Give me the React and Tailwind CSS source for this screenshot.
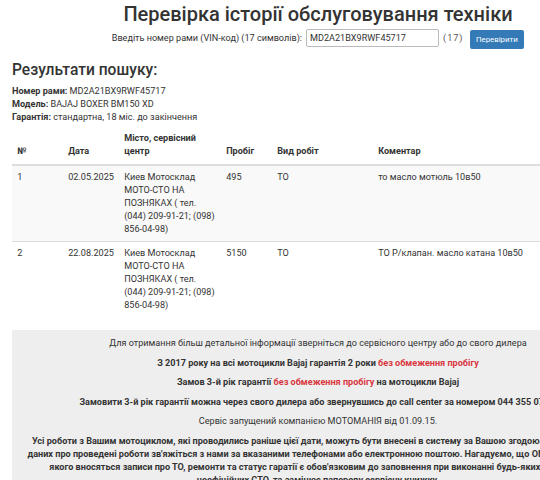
export default function App() {
    const rows = [
        {
            n: 1,
            date: '02.05.2025',
            center: 'Киев Мотосклад МОТО-СТО НА ПОЗНЯКАХ ( тел. (044) 209-91-21; (098) 856-04-98)',
            km: '495',
            work: 'ТО',
            note: 'то масло мотюль 10в50',
        },
        {
            n: 2,
            date: '22.08.2025',
            center: 'Киев Мотосклад МОТО-СТО НА ПОЗНЯКАХ ( тел. (044) 209-91-21; (098) 856-04-98)',
            km: '5150',
            work: 'ТО',
            note: 'ТО Р/клапан. масло катана 10в50',
        },
    ];

    const red = 'text-[#d9363e]';

    return (
        <div className="w-full overflow-hidden bg-white">
            <div className="w-[636px] px-[12px] font-[Roboto,sans-serif] text-[9.1px] leading-[13px] text-[#333]">
                <h1 className="pt-[3px] text-center text-[20px] leading-[22px] font-medium">
                    Перевірка історії обслуговування техніки
                </h1>

                <form className="mt-[2px] flex items-center justify-center" onSubmit={(e) => e.preventDefault()}>
                    <label className="mr-[4px]">Введіть номер рами (VIN-код) (17 символів):</label>
                    <input
                        type="text"
                        defaultValue="MD2A21BX9RWF45717"
                        className="h-[18px] w-[133px] rounded-[2px] border border-[#bbb] px-[3px] text-[9.1px] text-[#333] outline-none"
                    />
                    <span className="ml-[4px] tracking-[1px] text-[#555]">(17)</span>
                    <button
                        type="submit"
                        className="ml-[6px] mt-[3px] h-[19px] rounded-[2px] bg-[#337ab7] px-[6.5px] text-[7.8px] leading-[19px] text-white"
                    >
                        Перевірити
                    </button>
                </form>

                <h3 className="mt-[13px] mb-[6px] text-[15.6px] leading-[1.1] font-medium">Результати пошуку:</h3>

                <div>
                    <div><strong>Номер рами:</strong> MD2A21BX9RWF45717</div>
                    <div><strong>Модель:</strong> BAJAJ BOXER BM150 XD</div>
                    <div><strong>Гарантія:</strong> стандартна, 18 міс. до закінчення</div>
                </div>

                <table className="mt-[3px] mb-[13px] w-full table-fixed border-collapse">
                    <thead>
                        <tr>
                            <th className="w-[51px] border-b-2 border-[#ddd] p-[5.2px] text-left align-bottom font-bold">№</th>
                            <th className="w-[56px] border-b-2 border-[#ddd] p-[5.2px] text-left align-bottom font-bold">Дата</th>
                            <th className="w-[102px] border-b-2 border-[#ddd] p-[5.2px] text-left align-bottom font-bold">Місто, сервісний центр</th>
                            <th className="w-[51px] border-b-2 border-[#ddd] p-[5.2px] text-left align-bottom font-bold">Пробіг</th>
                            <th className="w-[101px] border-b-2 border-[#ddd] p-[5.2px] text-left align-bottom font-bold">Вид робіт</th>
                            <th className="border-b-2 border-[#ddd] p-[5.2px] text-left align-bottom font-bold">Коментар</th>
                        </tr>
                    </thead>
                    <tbody>
                        {rows.map((row, i) => (
                            <tr key={row.n} className={i % 2 === 0 ? 'bg-[#f9f9f9]' : ''}>
                                <td className="border-t border-[#ddd] p-[5.2px] align-top">{row.n}</td>
                                <td className="border-t border-[#ddd] p-[5.2px] align-top">{row.date}</td>
                                <td className="border-t border-[#ddd] p-[5.2px] align-top">{row.center}</td>
                                <td className="border-t border-[#ddd] p-[5.2px] align-top">{row.km}</td>
                                <td className="border-t border-[#ddd] p-[5.2px] align-top">{row.work}</td>
                                <td className="border-t border-[#ddd] p-[5.2px] align-top">{row.note}</td>
                            </tr>
                        ))}
                    </tbody>
                </table>

                <div className="bg-[#eee] pt-[7px] pb-[10px] text-center">
                    <p className="mb-[6.5px]">
                        Для отримання більш детальної інформації зверніться до сервісного центру або до свого дилера
                    </p>
                    <p className="mb-[6.5px] font-bold">
                        З 2017 року на всі мотоцикли Bajaj гарантія 2 роки <span className={red}>без обмеження пробігу</span>
                    </p>
                    <p className="mb-[6.5px] font-bold">
                        Замов 3-й рік гарантії <span className={red}>без обмеження пробігу</span> на мотоцикли Bajaj
                    </p>
                    <p className="mb-[6.5px] font-bold">
                        Замовити 3-й рік гарантії можна через свого дилера або звернувшись до call center за номером 044 355 07 07
                    </p>
                    <p className="mb-[6.5px]">Сервіс запущений компанією МОТОМАНІЯ від 01.09.15.</p>
                    <p className="font-bold">
                        Усі роботи з Вашим мотоциклом, які проводились раніше цієї дати, можуть бути внесені в систему за Вашою згодою. Для внесення
                        <br />
                        даних про проведені роботи зв'яжіться з нами за вказаними телефонами або електронною поштою. Нагадуємо, що ONLINE книжка, в
                        <br />
                        якого вносяться записи про ТО, ремонти та статус гаратії є обов'язковим до заповнення при виконанні будь-яких дій з мото
                        <br />
                        неофіційних СТО, та замінює паперову сервісну книжку.
                    </p>
                </div>
            </div>
        </div>
    );
}
